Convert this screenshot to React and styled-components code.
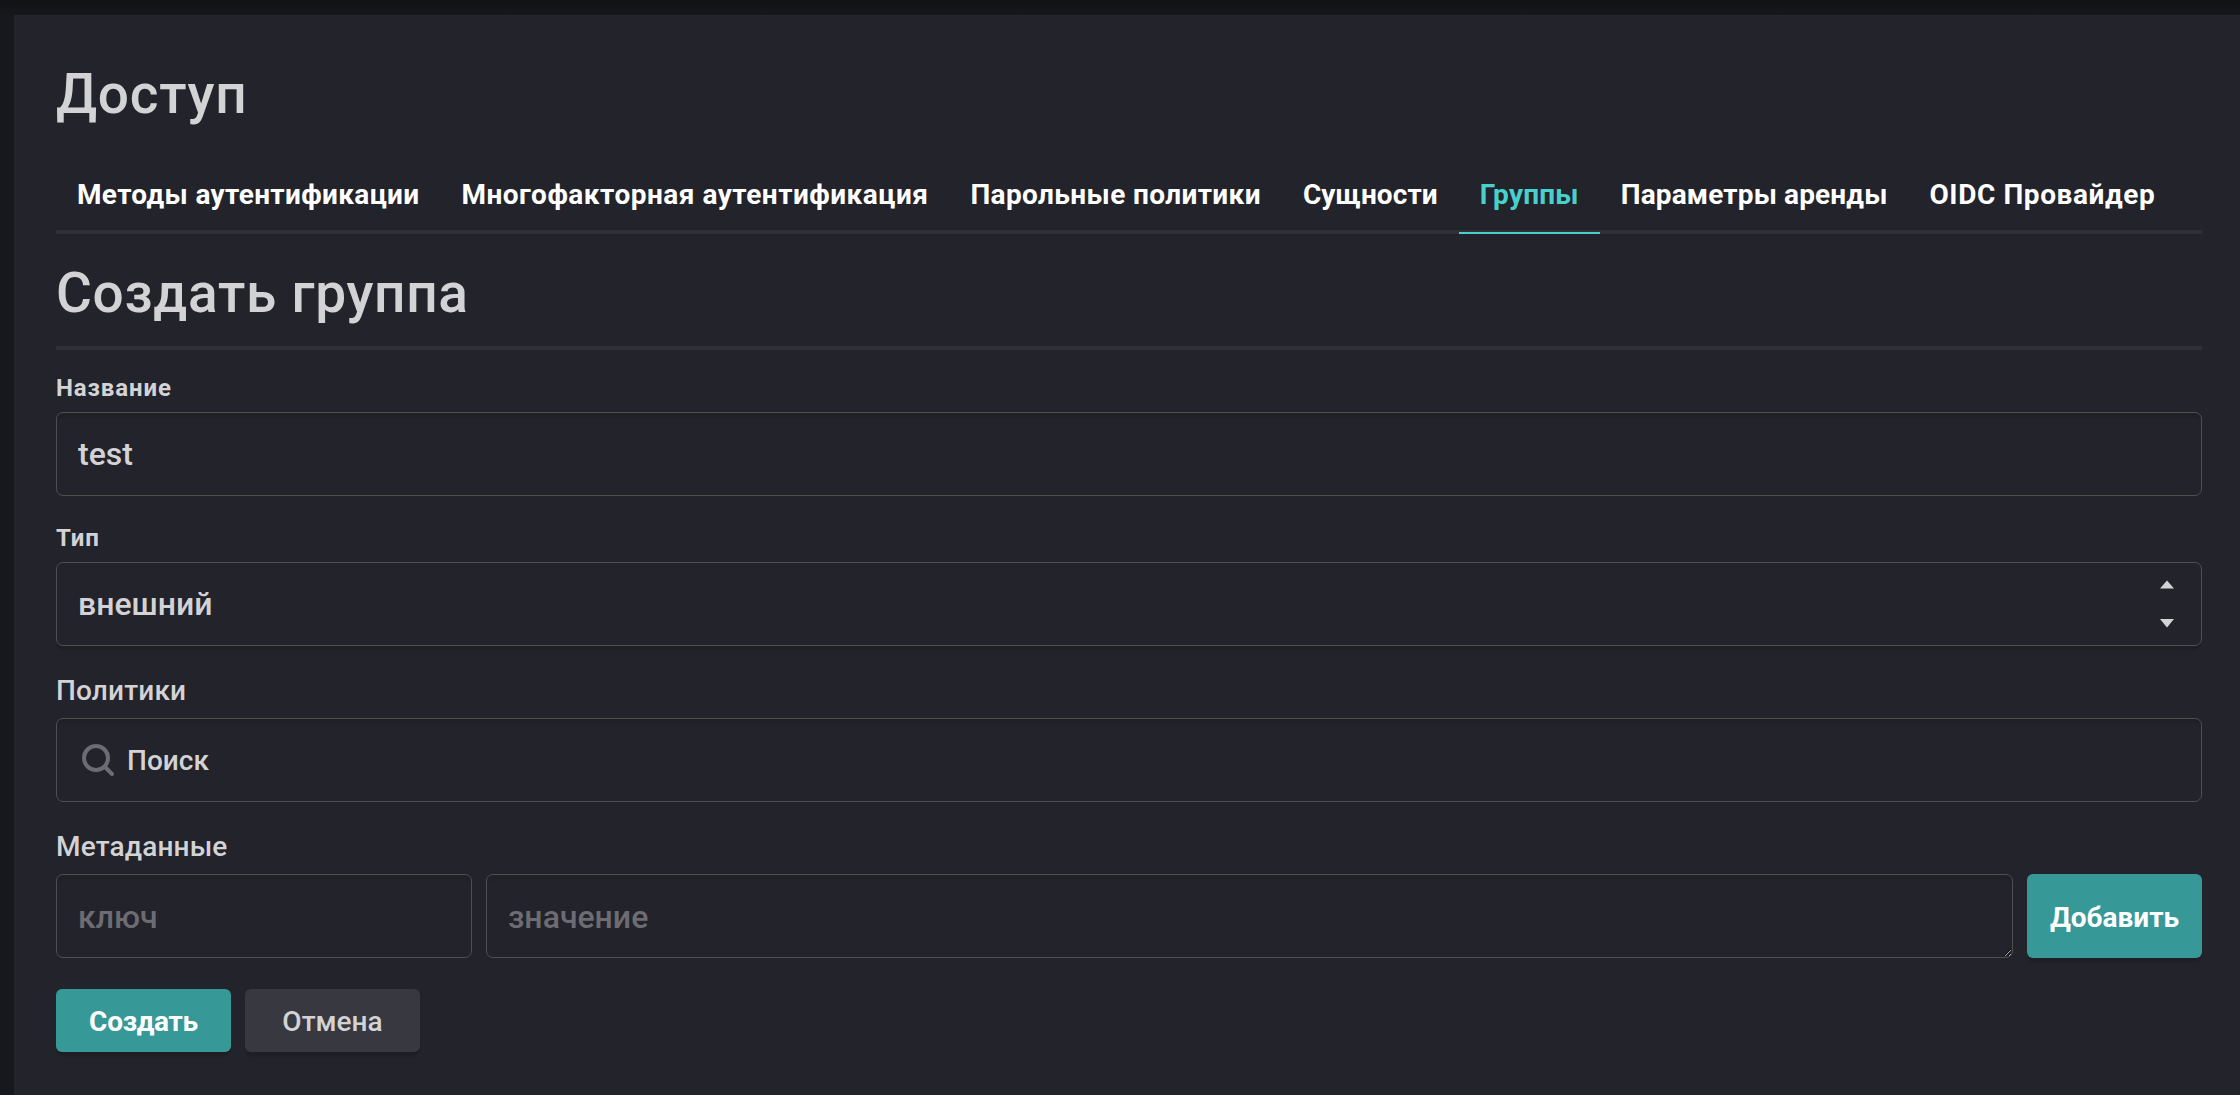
import React, { useState } from "react";
import styled, { createGlobalStyle } from "styled-components";

const GlobalStyle = createGlobalStyle`
  * {
    box-sizing: border-box;
  }
  body {
    margin: 0;
    background: #23232b;
    color: #d3d3d5;
    font-family: Roboto, "Noto Sans", sans-serif;
    font-size: 28px;
    font-weight: 500;
    overflow: hidden;
  }
  input, select, textarea, button {
    font-family: inherit;
  }
`;

const Page = styled.div`
  height: 1095px;
  padding: 15px 0 0 14px;
  background: linear-gradient(#111216 0, #17181c 15px);
  overflow: hidden;
`;

const Panel = styled.main`
  height: 1080px;
  padding: 39px 38px 0 42px;
  background: #23232b;
`;

const Title = styled.h1`
  margin: 0;
  height: 77px;
  line-height: 80px;
  font-size: 55px;
  font-weight: 500;
  letter-spacing: 0.7px;
`;

const Tabs = styled.nav`
  display: flex;
  height: 80px;
  margin-top: 23px;
  box-shadow: inset 0 -4px 0 #2f2f38;
`;

const Tab = styled.a`
  height: 80px;
  padding: 20px 21px 0;
  line-height: 42px;
  font-weight: 700;
  letter-spacing: ${({ $spacing }) => $spacing}px;
  white-space: nowrap;
  color: ${({ $active }) => ($active ? "#48d1cc" : "#fff")};
  border-bottom: 2px solid ${({ $active }) => ($active ? "#48d1cc" : "transparent")};
`;

const FormHeader = styled.header`
  height: 116px;
  padding-top: 19px;
  box-shadow: inset 0 -4px 0 #2f2f38;
`;

const Form = styled.form`
  display: flex;
  flex-direction: column;
`;

const Field = styled.div`
  display: flex;
  flex-direction: column;
  margin-top: ${({ $top }) => $top}px;
`;

const Label = styled.label`
  height: 42px;
  line-height: ${({ $small }) => ($small ? 37 : 30)}px;
  font-size: ${({ $small }) => ($small ? 24 : 28)}px;
  font-weight: ${({ $small }) => ($small ? 700 : 500)};
  letter-spacing: ${({ $small }) => ($small ? 0.9 : 0.15)}px;
`;

const Box = styled.div`
  display: flex;
  align-items: center;
  height: 84px;
  border: 1px solid #4f4f52;
  border-radius: 7px;
  padding: 0 27px 0 21px;
  box-shadow: ${({ $raised }) =>
    $raised ? "0 5px 2px -1px rgba(10, 10, 10, 0.12)" : "inset 0 5px 2px -1px rgba(10, 10, 10, 0.1)"};
`;

const Input = styled.input`
  flex: ${({ $width }) => ($width ? `0 0 ${$width}px` : "1 1 auto")};
  min-width: 0;
  height: 84px;
  border: 1px solid #4f4f52;
  border-radius: 7px;
  padding: 0 21px;
  background: transparent;
  color: #d3d3d5;
  font-size: 32px;
  font-weight: 500;
  box-shadow: inset 0 5px 2px -1px rgba(10, 10, 10, 0.1);
  outline: none;
  &::placeholder {
    color: #6c6c72;
  }
`;

const KeyInput = styled(Input)`
  padding-top: 2px;
`;

const TextArea = styled(Input).attrs({ as: "textarea" })`
  padding: 21px;
  line-height: 42px;
  resize: vertical;
  overflow: hidden;
`;

const SelectValue = styled.span`
  flex: 1;
  font-size: 32px;
`;

const SearchText = styled.span`
  margin-left: 7px;
`;

const MetaRow = styled.div`
  display: flex;
  gap: 14px;
`;

const Buttons = styled.div`
  display: flex;
  gap: 14px;
  margin-top: 31px;
`;

const Button = styled.button`
  flex: none;
  width: 175px;
  height: ${({ $tall }) => ($tall ? 84 : 63)}px;
  border: 0;
  border-radius: 6px;
  padding: 2px 0 0;
  background: ${({ $secondary }) => ($secondary ? "#383840" : "#379898")};
  color: ${({ $secondary }) => ($secondary ? "#d3d3d5" : "#fff")};
  font-size: 28px;
  font-weight: ${({ $secondary }) => ($secondary ? 500 : 700)};
  letter-spacing: ${({ $spacing }) => $spacing || 0}px;
  box-shadow: 0 5px 2px -1px rgba(10, 10, 10, 0.15);
`;

const tabs = [
  { label: "Методы аутентификации", spacing: 0.35 },
  { label: "Многофакторная аутентификация", spacing: 0.5 },
  { label: "Парольные политики", spacing: 0.38 },
  { label: "Сущности", spacing: 0.1 },
  { label: "Группы", spacing: 0.2 },
  { label: "Параметры аренды", spacing: 0.14 },
  { label: "OIDC Провайдер", spacing: 0.6 },
];

const SortArrows = () => (
  <svg width="14" height="48" viewBox="0 0 14 48" fill="#d3d3d5">
    <path d="M0 8.5 7 0.5 14 8.5Z" />
    <path d="M0 39 7 47.5 14 39Z" />
  </svg>
);

const SearchIcon = () => (
  <svg width="42" height="42" viewBox="0 0 42 42" fill="none" stroke="#6c6c72" strokeWidth="4">
    <circle cx="18" cy="19" r="12" />
    <path d="M27 28 34 35" strokeLinecap="round" />
  </svg>
);

const App = () => {
  const [name, setName] = useState("test");

  return (
    <>
      <GlobalStyle />
      <Page>
        <Panel>
          <Title>Доступ</Title>
          <Tabs>
            {tabs.map((tab) => (
              <Tab key={tab.label} $spacing={tab.spacing} $active={tab.label === "Группы"}>
                {tab.label}
              </Tab>
            ))}
          </Tabs>
          <FormHeader>
            <Title>Создать группа</Title>
          </FormHeader>
          <Form>
            <Field $top={20}>
              <Label $small>Название</Label>
              <Input value={name} onChange={(e) => setName(e.target.value)} />
            </Field>
            <Field $top={24}>
              <Label $small>Тип</Label>
              <Box $raised>
                <SelectValue>внешний</SelectValue>
                <SortArrows />
              </Box>
            </Field>
            <Field $top={30}>
              <Label>Политики</Label>
              <Box>
                <SearchIcon />
                <SearchText>Поиск</SearchText>
              </Box>
            </Field>
            <Field $top={30}>
              <Label>Метаданные</Label>
              <MetaRow>
                <KeyInput $width={416} placeholder="ключ" />
                <TextArea placeholder="значение" />
                <Button type="button" $tall>
                  Добавить
                </Button>
              </MetaRow>
            </Field>
            <Buttons>
              <Button type="button" $spacing={-0.3}>
                Создать
              </Button>
              <Button type="button" $secondary>
                Отмена
              </Button>
            </Buttons>
          </Form>
        </Panel>
      </Page>
    </>
  );
};

export default App;
